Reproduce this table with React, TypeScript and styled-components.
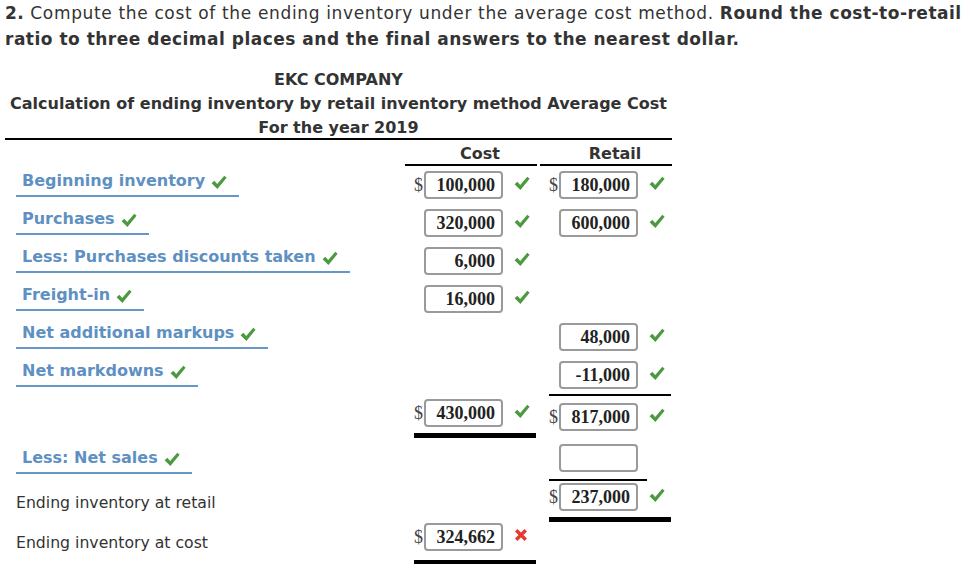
import styled, { createGlobalStyle } from 'styled-components';

const GlobalStyle = createGlobalStyle`
  html, body {
    margin: 0;
    padding: 0;
    background: #ffffff;
  }
  body {
    font-family: "DejaVu Sans", Verdana, sans-serif;
    color: #333333;
  }
`;

type Field = {
  value: string;
  dollar?: boolean;
  mark?: 'ok' | 'bad';
};

type Entry = {
  label: string;
  cost?: Field;
  retail?: Field;
};

type Rule = 'top' | 'bottom' | 'thin' | 'end';

const Check = () => (
  <svg width="16" height="15" viewBox="0 0 16 15">
    <path d="M0.6 8.2 L3.3 5.7 L6.2 9 L13.3 0.8 L15.6 2.8 L6.4 14 Z" fill="#4c9a3f" />
  </svg>
);

const Cross = () => (
  <svg width="14" height="14" viewBox="0 0 14 14">
    <path d="M2.2 2.2 L11.8 11.8 M11.8 2.2 L2.2 11.8" fill="none" stroke="#e63a2e" strokeWidth="3.4" />
  </svg>
);

const rows: Entry[] = [
  { label: 'Beginning inventory', cost: { value: '100,000', dollar: true, mark: 'ok' }, retail: { value: '180,000', dollar: true, mark: 'ok' } },
  { label: 'Purchases', cost: { value: '320,000', mark: 'ok' }, retail: { value: '600,000', mark: 'ok' } },
  { label: 'Less: Purchases discounts taken', cost: { value: '6,000', mark: 'ok' } },
  { label: 'Freight-in', cost: { value: '16,000', mark: 'ok' } },
  { label: 'Net additional markups', retail: { value: '48,000', mark: 'ok' } },
  { label: 'Net markdowns', retail: { value: '-11,000', mark: 'ok' } },
];

const AmountCell = ({ field }: { field?: Field }) => {
  if (!field) return <span />;
  return (
    <Amount>
      <Dollar>{field.dollar ? '$' : ''}</Dollar>
      <Box>{field.value}</Box>
      <Mark>{field.mark === 'bad' ? <Cross /> : <Check />}</Mark>
    </Amount>
  );
};

export default function App() {
  return (
    <Page>
      <GlobalStyle />
      <Prompt>
        <b>2.</b> Compute the cost of the ending inventory under the average cost method.{' '}
        <b>Round the cost-to-retail ratio to three decimal places and the final answers to the nearest dollar.</b>
      </Prompt>

      <Table>
        <Heading>
          <div>EKC COMPANY</div>
          <div>Calculation of ending inventory by retail inventory method Average Cost</div>
          <div>For the year 2019</div>
        </Heading>

        <HeadRow>
          <span />
          <ColHead>Cost</ColHead>
          <ColHead>Retail</ColHead>
        </HeadRow>

        {rows.map((r) => (
          <Row key={r.label}>
            <LabelCell>
              <Label>
                {r.label} <Check />
              </Label>
            </LabelCell>
            <AmountCell field={r.cost} />
            <AmountCell field={r.retail} />
          </Row>
        ))}

        <TotalRow>
          <span />
          <Amount $rule="bottom">
            <Dollar>$</Dollar>
            <Box>430,000</Box>
            <Mark><Check /></Mark>
          </Amount>
          <Amount $rule="top">
            <Dollar>$</Dollar>
            <Box>817,000</Box>
            <Mark><Check /></Mark>
          </Amount>
        </TotalRow>

        <SalesRow>
          <LabelCell $top={8}>
            <Label>
              Less: Net sales <Check />
            </Label>
          </LabelCell>
          <span />
          <Amount $rule="thin">
            <Dollar />
            <Box />
          </Amount>
        </SalesRow>

        <EndRow>
          <Plain>Ending inventory at retail</Plain>
          <span />
          <Amount $rule="bottom">
            <Dollar>$</Dollar>
            <Box>237,000</Box>
            <Mark><Check /></Mark>
          </Amount>
        </EndRow>

        <EndRow>
          <Plain>Ending inventory at cost</Plain>
          <Amount $rule="end">
            <Dollar>$</Dollar>
            <Box>324,662</Box>
            <Mark><Cross /></Mark>
          </Amount>
          <span />
        </EndRow>
      </Table>
    </Page>
  );
}

const Page = styled.div`
  padding-left: 5px;
  width: 965px;
  min-height: 100vh;
  padding-bottom: 12px;
`;

const Prompt = styled.p`
  margin: 0;
  font-size: 17px;
  line-height: 26px;
  letter-spacing: 0.65px;
  color: #333333;

  b {
    font-weight: bold;
    letter-spacing: 0.5px;
  }
`;

const Table = styled.div`
  width: 667px;
  margin-top: 14px;
  display: flex;
  flex-direction: column;
`;

const Heading = styled.div`
  padding-top: 2px;
  text-align: center;
  font-weight: bold;
  font-size: 16px;
  line-height: 24px;
  color: #333333;
  border-bottom: 2px solid #000000;

  div:last-child {
    margin-bottom: -2px;
  }
`;

const Grid = styled.div`
  display: grid;
  grid-template-columns: 397px 132px 132px;
  column-gap: 3px;
  align-items: start;
`;

const HeadRow = styled(Grid)`
  height: 26px;
  align-items: end;
`;

const ColHead = styled.div`
  font-weight: bold;
  font-size: 16px;
  line-height: 20px;
  color: #333333;
  text-align: center;
  padding-left: 18px;
  border-bottom: 2px solid #000000;
`;

const Row = styled(Grid)`
  height: 38px;
  align-items: center;
`;

const TotalRow = styled(Grid)`
  height: 46px;
`;

const SalesRow = styled(Grid)`
  height: 38px;
`;

const EndRow = styled(Grid)`
  height: 40px;
`;

const LabelCell = styled.div<{ $top?: number }>`
  padding-left: 11px;
  align-self: start;
  margin-top: ${(p) => p.$top ?? 5}px;
`;

const Label = styled.span`
  display: inline-flex;
  align-items: center;
  gap: 6px;
  padding: 0 12px 5px 6px;
  border-bottom: 2px solid #6797c7;
  font-weight: bold;
  font-size: 16px;
  line-height: 18px;
  color: #5e90c2;

  svg {
    margin-top: 3px;
  }
`;

const Plain = styled.div`
  padding-left: 11px;
  margin-top: 15px;
  font-size: 15.7px;
  line-height: 20px;
  color: #333333;
`;

const Amount = styled.div<{ $rule?: Rule }>`
  display: flex;
  align-items: center;
  margin-left: 9px;
  width: ${(p) => (p.$rule === 'thin' ? '98px' : '122px')};
  padding-top: ${(p) =>
    p.$rule === 'top' ? '7px' : p.$rule === 'thin' ? '4px' : p.$rule ? '5px' : '0'};
  padding-bottom: ${(p) =>
    p.$rule === 'end' ? '9px' : p.$rule === 'bottom' ? '6px' : p.$rule === 'thin' ? '7px' : '0'};
  border-top: ${(p) => (p.$rule === 'top' ? '2px solid #000' : 'none')};
  border-bottom: ${(p) =>
    p.$rule === 'bottom'
      ? '5px solid #000'
      : p.$rule === 'end'
        ? '4px solid #000'
        : p.$rule === 'thin'
          ? '2px solid #000'
          : 'none'};
`;

const Dollar = styled.span`
  width: 10px;
  flex: none;
  font-family: "Liberation Serif", "Times New Roman", serif;
  font-size: 18px;
  line-height: 20px;
  color: #444444;
`;

const Box = styled.div`
  width: 79px;
  height: 28px;
  flex: none;
  box-sizing: border-box;
  border: 2px solid #9a9a9a;
  border-radius: 4px;
  padding-right: 6px;
  display: flex;
  align-items: center;
  justify-content: flex-end;
  font-family: "Liberation Serif", "Times New Roman", serif;
  font-weight: bold;
  font-size: 18px;
  color: #222222;
`;

const Mark = styled.span`
  margin-left: 11px;
  margin-top: -4px;
  display: flex;
  align-items: center;
`;
